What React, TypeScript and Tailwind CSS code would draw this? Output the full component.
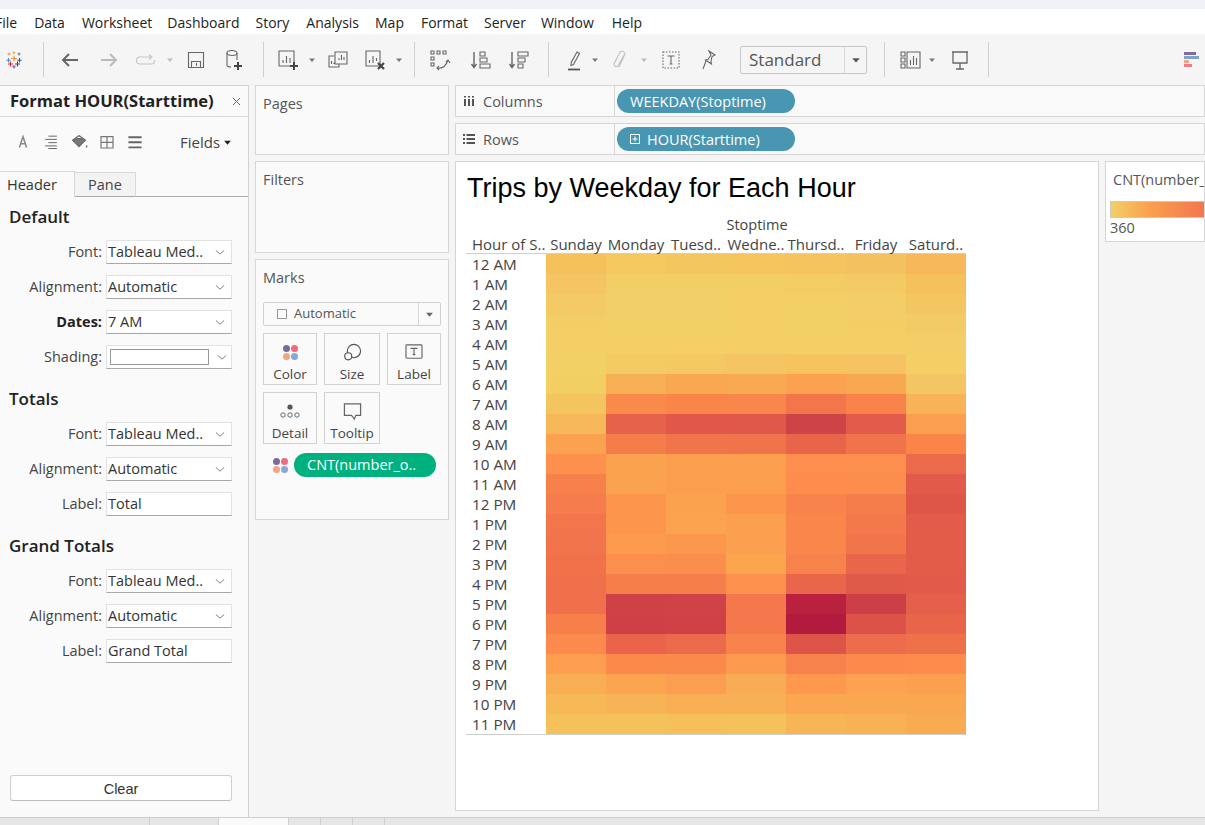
import React from "react";

const F = "font-['Open_Sans','Noto_Sans',sans-serif]";

const heat: string[][] = [
  ["f5c15b","f5c860","f4c660","f5c65e","f5c45f","f4c160","f6b85a"],
  ["f4c562","f3cd66","f3cd66","f3cd66","f4cc66","f4ca64","f4c15d"],
  ["f3ca63","f3d067","f3d067","f3cf66","f3cf66","f3cd66","f3c661"],
  ["f3cd65","f3cf67","f3cf67","f3cf66","f3d067","f3ce66","f3cb64"],
  ["f3cf66","f3cf66","f3cf66","f3cf66","f3cf66","f3cf66","f3cd65"],
  ["f3d066","f4ca64","f4c862","f5c563","f5c45f","f5c362","f3cf65"],
  ["f3ce63","f7b054","f9a750","f8aa52","fba14f","f9a852","f3c663"],
  ["f4c45f","fa8a4a","fa8549","f9864a","f2764a","f9824a","f7b356"],
  ["f6b859","e5634a","e1574a","e0584a","ce4347","e35c4b","fb9e50"],
  ["fba250","f57d4a","f1744b","f1734b","e9654a","f0734b","fb8549"],
  ["fd904c","fba24f","fb9f4f","fb9f4e","fd8e4d","fd8f4e","eb6a4b"],
  ["f7814b","fba24f","fb9f4f","fb9f4f","fd8c4d","fc8d4d","e15a4a"],
  ["f57c4c","fc964d","fba24f","fc964d","f9844b","f57d4b","dd5648"],
  ["f2754c","fc964d","fca350","fba04f","f9864b","f3784b","e35c4a"],
  ["f2744c","fc9a4e","fc974e","fba04f","f9864b","f1744b","e35c4a"],
  ["f1714b","fc8f4d","fc8e4d","fba64f","f7824c","ea664a","e35c4a"],
  ["f0704b","f57e4b","f67e4b","fd914d","e9664b","e05a49","e25b4a"],
  ["f0704b","ce4247","ce4248","f4784b","b9213f","cd3f47","e5604a"],
  ["f77f4a","ce4046","cf4146","f4784b","b31b3e","dc5248","e9654a"],
  ["fb8a4c","e9644a","ea6a4b","f8824b","dd5549","ec6c4b","ef714a"],
  ["fc9d50","fb8949","fa8a4c","fc9b4f","f8824c","fc8a4c","fc8b4c"],
  ["f8ae53","fca450","fc9e51","f8ac53","fe984f","fca250","fba04f"],
  ["f7b857","f7b456","f8ae54","f7b055","fba651","f9a850","f9a850"],
  ["f5c15a","f5c15a","f5c05a","f5c15a","f7b656","f8b155","f9ab52"],
];
const hours = ["12 AM","1 AM","2 AM","3 AM","4 AM","5 AM","6 AM","7 AM","8 AM","9 AM","10 AM","11 AM","12 PM","1 PM","2 PM","3 PM","4 PM","5 PM","6 PM","7 PM","8 PM","9 PM","10 PM","11 PM"];
const days = ["Sunday","Monday","Tuesd..","Wedne..","Thursd..","Friday","Saturd.."];
const menu: [string, string][] = [["File","ml-[-5px]"],["Data","ml-[17px]"],["Worksheet","ml-[17px]"],["Dashboard","ml-[15px]"],["Story","ml-[16px]"],["Analysis","ml-[17px]"],["Map","ml-[16px]"],["Format","ml-[17px]"],["Server","ml-[16px]"],["Window","ml-[15px]"],["Help","ml-[18px]"]];

const Ico = ({ children, className = "" }: { children: React.ReactNode; className?: string }) => (
  <svg viewBox="0 0 24 24" fill="none" stroke="#666" strokeWidth="1.1" className={`w-6 h-6 shrink-0 ${className}`}>{children}</svg>
);
const Caret = ({ className = "", color = "#777" }: { className?: string; color?: string }) => (
  <svg viewBox="0 0 8 8" className={`w-2 h-2 shrink-0 ${className}`}><path d="M1 2.5h6L4 6z" fill={color} /></svg>
);
const Divider = ({ className = "" }: { className?: string }) => <div className={`w-px h-[35px] bg-[#cfcfcf] shrink-0 ${className}`} />;

const Logo = () => (
  <svg viewBox="0 0 18 18" className="w-[18px] h-[18px] mx-[3px] shrink-0" strokeWidth="1.1">
    <path d="M9 4.5v6M6 7.5h6" stroke="#f28e2b" />
    <path d="M4 1.5v3M2.5 3h3" stroke="#e8a33d" />
    <path d="M14 1.5v3M12.5 3h3" stroke="#59879b" />
    <path d="M9 .5v2.6M7.7 1.8h2.6" stroke="#e8a33d" />
    <path d="M3.5 7v4.5M1.3 9.2h4.4" stroke="#5b8db8" />
    <path d="M14.5 7v4.5M12.3 9.2h4.4" stroke="#2f5d8c" />
    <path d="M5.5 10.5v5M3 13h5" stroke="#d62839" />
    <path d="M12.5 10.5v5M10 13h5" stroke="#2f4b7c" />
    <path d="M9 14v3.5M7.4 15.8h3.2" stroke="#7b5a8c" />
  </svg>
);

const Dots = ({ className = "" }: { className?: string }) => (
  <div className={`grid grid-cols-2 gap-[1px] ${className}`}>
    <span className="w-[7px] h-[7px] rounded-full bg-[#7b6a96]" />
    <span className="w-[7px] h-[7px] rounded-full bg-[#f0697f]" />
    <span className="w-[7px] h-[7px] rounded-full bg-[#f2a57e]" />
    <span className="w-[7px] h-[7px] rounded-full bg-[#86a8d2]" />
  </div>
);

const Toolbar = () => (
  <div className="h-[51px] bg-[#f5f5f5] flex items-center pl-[2px] overflow-hidden shrink-0">
    <div className="w-6 flex shrink-0"><Logo /></div>
    <Divider className="ml-[17px]" />
    <Ico className="ml-[14px]"><path d="M20 12H5M11 6l-6 6 6 6" strokeWidth="2" stroke="#666" /></Ico>
    <Ico className="ml-[15px]"><path d="M4 12h15M13 6l6 6-6 6" strokeWidth="2" stroke="#bbb" /></Ico>
    <Ico className="ml-[13px]"><path d="M17 9H6a2.5 2.5 0 0 0 0 7h12a2.5 2.5 0 0 0 2-4M15 6.5 18 9l-3 2.5" stroke="#c4c4c4" /></Ico>
    <Caret className="ml-[8px]" color="#bbb" />
    <Ico className="ml-[10px]"><path d="M4.5 4.5h15v15h-15zM7.5 19.5v-6h9v6M12.5 15v3" /></Ico>
    <Ico className="ml-[14px]"><ellipse cx="10" cy="5" rx="5" ry="2.5" /><path d="M5 5v12c0 1 1.500 2 4 2M15 5v7" /><path d="M16 14v8M12 18h8" strokeWidth="2" stroke="#444" /></Ico>
    <Divider className="ml-[17px]" />
    <Ico className="ml-[12px]"><path d="M3 3h15v15H3zM7 15v-3M10.500 15V8M14 15v-5" /><path d="M18 14v8M14 18h8" strokeWidth="2" stroke="#444" /></Ico>
    <Caret className="ml-[8px]" />
    <Ico className="ml-[10px]"><path d="M8 8H3v11h10v-3" /><path d="M9 4h12v12H9zM13 12V10M15.500 12V7M18 12V9M5.500 16v-3M8 16v-1.500" /></Ico>
    <Ico className="ml-[13px]"><path d="M3 3h14v15H3zM6.500 15v-3M10 15V8M13.500 13V10" /><path d="M15 15l6 6M21 15l-6 6" strokeWidth="2.200" stroke="#444" /></Ico>
    <Caret className="ml-[8px]" />
    <Divider className="ml-[11px]" />
    <Ico className="ml-[13px]"><path d="M3 3h3v3H3zM9 3h3v3H9zM15 3h3v3h-3zM3 9h3v3H3zM3 15h3v3H3zM9 20c5 1 9-2 11-8M18 14l2-2 2 3M11 18l-2 2 2 2" /></Ico>
    <Ico className="ml-[16px]"><path d="M6 4v15M3.500 16l2.500 3.500L8.500 16" strokeWidth="1.400" /><path d="M12 4h5v4h-5zM12 10h7v4h-7zM12 16h10v4H12z" /></Ico>
    <Ico className="ml-[14px]"><path d="M6 4v15M3.500 16l2.500 3.500L8.500 16" strokeWidth="1.400" /><path d="M12 4h10v4H12zM12 10h7v4h-7zM12 16h5v4h-5z" /></Ico>
    <Divider className="ml-[18px]" />
    <Ico className="ml-[13px]"><path d="M15 4l2.500 1.500-6 11-2.500 1 .2-3z" /><path d="M6 21.500h12" strokeWidth="1.800" stroke="#555" /></Ico>
    <Caret className="ml-[5px]" />
    <Ico className="ml-[9px]"><path d="M16 7l-6 11a2.500 2.500 0 0 1-4-2l6-12a3 3 0 0 1 5 2l-6 13" stroke="#c0c0c0" /></Ico>
    <Caret className="ml-[8px]" color="#bbb" />
    <Ico className="ml-[11px]"><path d="M4 4h16v16H4z" strokeDasharray="1.500 1.500" /><path d="M8.500 8h7M12 8v8M10.500 16h3" /></Ico>
    <Ico className="ml-[13px]"><path d="M13 3l6 4-3 1.500-1 5 .5 2.500-6-4 2.500-.5 3-4.500zM10 13l-3 8" /></Ico>
    <div className={`ml-[20px] w-[127px] h-[28px] border border-[#c8c8c8] rounded-[2px] flex items-center shrink-0 ${F}`}>
      <span className="flex-1 pl-[8px] text-[17px] text-[#555]">Standard</span>
      <span className="w-[22px] h-full border-l border-[#d8d8d8] flex items-center justify-center"><Caret className="w-[10px] h-[10px]" color="#555" /></span>
    </div>
    <Divider className="ml-[17px]" />
    <Ico className="ml-[14px]"><path d="M2 4h4v4H2zM2 10h4v4H2zM2 16h4v4H2zM8 4h13v16H8zM11.500 17v-5M14.500 17V8M17.500 17v-7" /></Ico>
    <Caret className="ml-[5px]" />
    <Ico className="ml-[12px]"><path d="M4 4h16M5 4v11h14V4M12 15v6M8 21h8" strokeWidth="1.300" /></Ico>
    <Divider className="ml-[16px]" />
    <div className="ml-[195px] w-[15px] flex flex-col gap-[1px] shrink-0">
      <span className="w-[12px] h-[3px] bg-[#7d6f9a]" />
      <span className="w-[15px] h-[3px] bg-[#7fa3cc]" />
      <span className="w-[5px] h-[3px] bg-[#f2a57e]" />
      <span className="w-[8px] h-[3px] bg-[#ee7d87]" />
    </div>
  </div>
);

const Select = ({ text, className = "" }: { text: string; className?: string }) => (
  <div className={`w-[126px] h-[24px] bg-white border border-[#e2e2e2] border-b-[#a8a8a8] flex items-center pl-[1px] shrink-0 ${className}`}>
    <span className="flex-1 whitespace-nowrap overflow-hidden text-[14.500px] text-[#333]">{text}</span>
    <svg viewBox="0 0 12 8" className="w-[10px] h-[7px] mr-[6px]" fill="none" stroke="#666"><path d="M1 1.500l5 4.500 5-4.500" /></svg>
  </div>
);
const Row = ({ label, bold, children }: { label: string; bold?: boolean; children: React.ReactNode }) => (
  <div className="flex items-center h-[24px] mb-[11px]">
    <span className={`w-[102px] pr-0 text-right text-[14.500px] ${bold ? "font-bold text-[#222]" : "text-[#444]"}`}>{label}:</span>
    <div className="ml-[4px]">{children}</div>
  </div>
);
const Heading = ({ t, className = "" }: { t: string; className?: string }) => (
  <div className={`pl-[9px] h-[24px] leading-[24px] text-[17px] font-semibold text-[#222] ${className}`}>{t}</div>
);

const LeftPanel = () => (
  <div className={`w-[249px] shrink-0 bg-[#fafafa] border-r border-[#d2d2d2] border-t flex flex-col ${F}`}>
    <div className="h-[31px] border-b border-[#d8d8d8] flex items-center pl-[10px] pr-[6px] shrink-0">
      <span className="flex-1 text-[16.500px] font-bold text-[#222] whitespace-nowrap">Format HOUR(Starttime)</span>
      <svg viewBox="0 0 10 10" className="w-[9px] h-[9px] mr-[1px]" stroke="#666" strokeWidth="1.100"><path d="M1 1l8 8M9 1l-8 8" /></svg>
    </div>
    <div className="h-[54px] flex items-center pl-[11px] pb-[4px] shrink-0">
      <Ico className="scale-[0.6]"><path d="M6 21l6-18 6 18M8.500 15h7" strokeWidth="2.600" stroke="#888" /></Ico>
      <Ico className="ml-[4px] scale-[0.65]"><path d="M8 3h13M3 8h18M8 13h13M3 18h18M8 22h13" stroke="#666" strokeWidth="1.500" /></Ico>
      <Ico className="ml-[4px] scale-90"><path d="M5 10l7-5 7 5-7 7z" stroke="#777" strokeWidth="1.500" /><path d="M5 10c2-2.500 12-2.500 14 0l-7 7z" fill="#777" /><path d="M20.500 15c1 1.500 1.500 2.500 0 3.500-1.500-1-1-2 0-3.500z" fill="#777" stroke="none" /></Ico>
      <Ico className="ml-[4px] scale-[0.6]"><path d="M2 3h20v19H2zM12 3v19M2 12.500h20" strokeWidth="2" stroke="#777" /></Ico>
      <Ico className="ml-[4px] scale-[0.6]"><path d="M1 4h22M1 12.500h22M1 21h22" strokeWidth="3.200" stroke="#666" /></Ico>
      <span className="ml-[33px] text-[15px] text-[#444]">Fields</span>
      <Caret className="ml-[3px] w-[9px] h-[9px]" color="#222" />
    </div>
    <div className="h-[26px] flex items-end shrink-0">
      <div className="w-[75px] h-[26px] bg-[#fafafa] border-t border-r border-[#d8d8d8] pl-[7px] text-[14.500px] leading-[25px] text-[#333]">Header</div>
      <div className="w-[61px] h-[25px] bg-[#f3f3f3] border-t border-r border-b border-[#d8d8d8] border-b-[#aaa] text-center text-[14.500px] leading-[23px] text-[#444]">Pane</div>
      <div className="flex-1 border-b border-[#aaa]" />
    </div>
    <Heading t="Default" className="mt-[8px]" />
    <div className="mt-[11px]">
      <Row label="Font"><Select text="Tableau Med.." /></Row>
      <Row label="Alignment"><Select text="Automatic" /></Row>
      <Row label="Dates" bold><Select text="7 AM" /></Row>
      <Row label="Shading">
        <div className="w-[126px] h-[24px] bg-white border border-[#e2e2e2] border-b-[#a8a8a8] flex items-center pl-[3px]">
          <span className="w-[99px] h-[16px] border border-[#999] bg-white" />
          <svg viewBox="0 0 12 8" className="w-[10px] h-[7px] ml-[8px]" fill="none" stroke="#666"><path d="M1 1.500l5 4.500 5-4.500" /></svg>
        </div>
      </Row>
    </div>
    <Heading t="Totals" className="mt-[7px]" />
    <div className="mt-[11px]">
      <Row label="Font"><Select text="Tableau Med.." /></Row>
      <Row label="Alignment"><Select text="Automatic" /></Row>
      <Row label="Label"><div className="w-[126px] h-[24px] bg-white border border-[#e2e2e2] border-b-[#a8a8a8] pl-[1px] text-[14.500px] leading-[22px] text-[#333]">Total</div></Row>
    </div>
    <Heading t="Grand Totals" className="mt-[7px]" />
    <div className="mt-[11px]">
      <Row label="Font"><Select text="Tableau Med.." /></Row>
      <Row label="Alignment"><Select text="Automatic" /></Row>
      <Row label="Label"><div className="w-[126px] h-[24px] bg-white border border-[#e2e2e2] border-b-[#a8a8a8] pl-[1px] text-[14.500px] leading-[22px] text-[#333]">Grand Total</div></Row>
    </div>
    <div className="mt-auto mb-[16px] mx-[10px] w-[222px] h-[26px] bg-white border border-[#cfcfcf] border-b-[#bdbdbd] rounded-[3px] text-center font-['Liberation_Sans',sans-serif] text-[14.500px] leading-[26px] text-[#333]">Clear</div>
  </div>
);

const Card = ({ t, h }: { t: string; h: string }) => (
  <div className={`border border-[#d6d6d6] bg-[#fafafa] pl-[7px] pt-[7px] text-[14.500px] text-[#555] ${h}`}>{t}</div>
);
const MarkBtn = ({ label, icon, w }: { label: string; icon: React.ReactNode; w: string }) => (
  <div className={`${w} h-[52px] border border-[#d2d2d2] flex flex-col items-center pt-[6px] text-[13.500px] text-[#444] leading-[18px]`}>
    <div className="h-[24px] flex items-center justify-center mb-[1px]">{icon}</div>
    {label}
  </div>
);

const MiddleColumn = () => (
  <div className={`w-[194px] ml-[6px] shrink-0 flex flex-col gap-[6px] ${F}`}>
    <Card t="Pages" h="h-[70px]" />
    <Card t="Filters" h="h-[92px]" />
    <div className="h-[261px] border border-[#d6d6d6] bg-[#fafafa] px-[7px] pt-[8px]">
      <div className="text-[14.500px] leading-[20px] text-[#555]">Marks</div>
      <div className="mt-[14px] h-[24px] border border-[#d0d0d0] rounded-[2px] flex items-center text-[13px] text-[#555]">
        <span className="ml-[13px] w-[10px] h-[10px] border border-[#999]" />
        <span className="ml-[7px] flex-1">Automatic</span>
        <span className="w-[22px] h-full border-l border-[#d8d8d8] flex items-center justify-center"><Caret className="w-[9px] h-[9px]" color="#666" /></span>
      </div>
      <div className="mt-[7px] flex gap-[7px]">
        <MarkBtn w="w-[54px]" label="Color" icon={<Dots />} />
        <MarkBtn w="w-[56px]" label="Size" icon={<svg viewBox="0 0 20 20" className="w-[19px] h-[19px]" fill="none" stroke="#555" strokeWidth="1.200"><circle cx="11.500" cy="8.500" r="7" /><circle cx="5.500" cy="14" r="3.700" fill="#fafafa" /></svg>} />
        <MarkBtn w="w-[54px]" label="Label" icon={<svg viewBox="0 0 20 18" className="w-[18px] h-[16px]" fill="none" stroke="#666"><rect x="1" y="1" width="18" height="15" rx="1" strokeWidth="1.300" /><path d="M6 5h8M10 5v7M8.500 12h3" strokeWidth="1.300" /></svg>} />
      </div>
      <div className="mt-[7px] flex gap-[7px]">
        <MarkBtn w="w-[54px]" label="Detail" icon={<svg viewBox="0 0 20 14" className="w-[20px] h-[14px]" fill="none" stroke="#666"><circle cx="10" cy="3" r="2.600" fill="#555" stroke="none" /><circle cx="3" cy="11" r="2.200" /><circle cx="10" cy="11" r="2.200" /><circle cx="17" cy="11" r="2.200" /></svg>} />
        <MarkBtn w="w-[56px]" label="Tooltip" icon={<svg viewBox="0 0 20 20" className="w-[19px] h-[19px]" fill="none" stroke="#666" strokeWidth="1.300"><path d="M1.500 2h17v12h-5l-1.500 4-3-4H1.500z" /></svg>} />
      </div>
      <div className="mt-[9px] flex items-center">
        <Dots className="ml-[10px]" />
        <div className="ml-[6px] w-[142px] h-[24px] rounded-full bg-[#00b180] text-white text-[14.500px] leading-[23px] pl-[13px]">CNT(number_o..</div>
      </div>
    </div>
  </div>
);

const Shelf = ({ icon, label, pill }: { icon: React.ReactNode; label: string; pill: React.ReactNode }) => (
  <div className="h-[32px] border border-[#d6d6d6] bg-[#f9f9f9] flex items-center overflow-hidden">
    <div className="w-[159px] h-full border-r border-[#d6d6d6] flex items-center shrink-0 pl-[7px] text-[14.500px] text-[#555]">
      {icon}
      <span className="ml-[8px] pt-[1px]">{label}</span>
    </div>
    <div className="ml-[2px] w-[178px] h-[24px] rounded-full bg-[#4996b2] text-white text-[14.500px] leading-[23px] whitespace-nowrap flex items-center pl-[13px]">{pill}</div>
  </div>
);

const Chart = () => (
  <div className="ml-[10px] w-[500px]">
    <div className="text-center pl-[82px] text-[14.500px] leading-[20px] text-[#444] mt-[11px]">Stoptime</div>
    <div className="grid grid-cols-[80px_repeat(7,60px)] h-[19px] border-b border-[#cfcfcf] text-[15px] leading-[19px] text-[#444] whitespace-nowrap">
      <span className="pl-[6px]">Hour of S..</span>
      {days.map((d) => <span key={d} className="text-center">{d}</span>)}
    </div>
    <div className="grid grid-cols-[80px_repeat(7,60px)] auto-rows-[20px] border-b border-[#cfcfcf]">
      {hours.map((h, i) => (
        <React.Fragment key={h}>
          <span className="pl-[6px] text-[15.250px] leading-[20px] text-[#444]">{h}</span>
          {heat[i].map((c, j) => <div key={j} style={{ backgroundColor: `#${c}` }} />)}
        </React.Fragment>
      ))}
    </div>
  </div>
);

const RightArea = () => (
  <div className={`ml-[6px] flex-1 min-w-0 flex flex-col gap-[6px] ${F}`}>
    <Shelf label="Columns" pill="WEEKDAY(Stoptime)" icon={<svg viewBox="0 0 12 12" className="w-[12px] h-[12px]" fill="#555"><path d="M1 4h2v7H1zM5 4h2v7H5zM9 4h2v7H9zM1 1h2v1.500H1zM5 1h2v1.500H5zM9 1h2v1.500H9z" /></svg>} />
    <Shelf label="Rows" pill={<><svg viewBox="0 0 10 10" className="w-[10px] h-[10px] mr-[7px]" fill="none" stroke="#fff"><path d="M.5.500h9v9h-9zM5 2.500v5M2.500 5h5" /></svg>HOUR(Starttime)</>} icon={<svg viewBox="0 0 12 12" className="w-[12px] h-[12px]" fill="#555"><path d="M0 1h2v2H0zM0 5h2v2H0zM0 9h2v2H0zM3.500 1H12v2H3.500zM3.500 5H12v2H3.500zM3.500 9H12v2H3.500z" /></svg>} />
    <div className="flex flex-1 gap-[6px]">
      <div className="w-[644px] h-[650px] bg-white border border-[#d6d6d6] shrink-0">
        <div className="pl-[11px] pt-[10px] font-['Liberation_Sans',sans-serif] text-[27px] leading-[32px] text-black whitespace-nowrap">Trips by Weekday for Each Hour</div>
        <Chart />
      </div>
      <div className="flex-1 h-[81px] border border-[#d6d6d6] bg-white pl-[7px] pt-[8px] overflow-hidden">
        <div className="text-[14.500px] leading-[20px] text-[#555] whitespace-nowrap">CNT(number_of_trips)</div>
        <div className="mt-[11px] ml-[-3px] w-[200px] h-[17px] border border-[#c8c8c8] bg-[linear-gradient(90deg,#f3cf66,#fa9e4e_40px,#f2754e_95px,#b51c3e_200px)]" />
        <div className="ml-[-3px] text-[14.500px] leading-[20px] text-[#555]">360</div>
      </div>
    </div>
  </div>
);

export default function App() {
  return (
    <div className="w-[1205px] h-[825px] overflow-hidden flex flex-col bg-[#f5f5f5]">
      <div className="h-[9px] bg-[#f1f2f7] shrink-0" />
      <div className={`h-[25px] bg-white flex items-center pt-[2px] text-[14px] text-[#222] whitespace-nowrap shrink-0 ${F}`}>
        {menu.map(([m, c]) => <span key={m} className={c}>{m}</span>)}
      </div>
      <Toolbar />
      <div className="flex flex-1 min-h-0">
        <LeftPanel />
        <MiddleColumn />
        <RightArea />
      </div>
      <div className="h-[8px] bg-[#e6e6e6] border-t border-[#cfcfcf] flex shrink-0">
        <div className="w-[150px] border-r border-[#cfcfcf]" />
        <div className="w-[69px] border-r border-[#cfcfcf]" />
        <div className="w-[70px] border-r border-[#cfcfcf] bg-[#fafafa]" />
        <div className="w-[32px] border-r border-[#cfcfcf]" />
        <div className="w-[32px] border-r border-[#cfcfcf]" />
        <div className="w-[32px] border-r border-[#cfcfcf]" />
      </div>
    </div>
  );
}
